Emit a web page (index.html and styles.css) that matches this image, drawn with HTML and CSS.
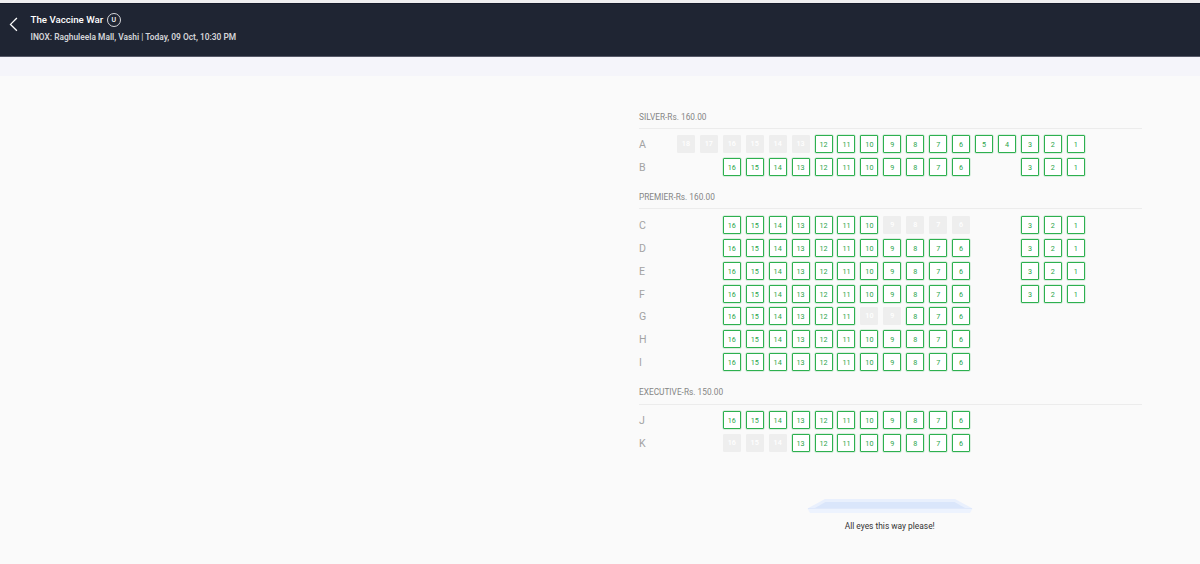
FILE: index.html
```
<!DOCTYPE html>
<html lang="en">
<head>
  <meta charset="UTF-8">
  <meta name="viewport" content="width=device-width, initial-scale=1.0">
  <title>The Vaccine War - Select Seats</title>
  <link rel="stylesheet" href="styles.css">
</head>
<body>
  <header class="header">
    <svg class="back" viewBox="0 0 9 15" width="9" height="15">
      <path d="M7.900 1 L1.500 7.400 L7.900 13.800" />
    </svg>
    <div class="show">
      <h1>The Vaccine War <span class="rating">U</span></h1>
      <p>INOX: Raghuleela Mall, Vashi | Today, 09 Oct, 10:30 PM</p>
    </div>
  </header>
  <div class="subbar"></div>

  <main class="layout">
    <div id="seats"></div>

    <!-- Screen -->
    <div class="screen">
      <svg viewBox="0 0 166 15" width="166" height="15">
        <path d="M18 0 H148 L165.500 9.500 H0.500 Z" fill="#e9f0fd" />
        <path d="M18.500 3 H147.500 L158 9 H8 Z" fill="#dae6fb" />
        <path d="M0.500 9.500 H165.500 L163 14 H3 Z" fill="#edf3fe" />
        <path d="M1 9.500 H165" stroke="#e0e9fb" />
      </svg>
      <p>All eyes this way please!</p>
    </div>
  </main>

  <script src="seats.js"></script>
</body>
</html>
```
FILE: styles.css
```
* {
  box-sizing: border-box;
}
body {
  margin: 0;
  background-color: #fafafa;
  font-family: Roboto, sans-serif;
  border-top: 3px solid #eeeeef;
}
h1, h2, p {
  margin: 0;
}
.header {
  display: flex;
  height: 54px;
  padding: 8px 0 0 9px;
  background-color: #1f2533;
  border-top: 1px solid #161b2a;
  border-bottom: 1px solid #565968;
  color: #fff;
}
.back {
  margin: 5px 12.5px 0 0;
  fill: none;
  stroke: #fff;
  stroke-width: 1.3;
}
.show h1 {
  display: flex;
  align-items: center;
  height: 15px;
  font-size: 9.7px;
  font-weight: 500;
}
.rating {
  width: 14px;
  height: 14px;
  margin-left: 3.5px;
  border: 1px solid #d5d6da;
  border-radius: 50%;
  font-size: 7px;
  line-height: 12px;
  text-align: center;
}
.show p {
  margin-top: 4px;
  font-size: 8.4px;
  line-height: 12px;
  font-weight: 600;
  color: #d3d4d8;
}
.subbar {
  height: 19px;
  background-color: #f5f5fa;
}
.layout {
  width: 502.5px;
  margin: 22px 0 0 639px;
}
.section h2 {
  height: 30.9px;
  margin-bottom: 3.8px;
  border-bottom: 1px solid #ececec;
  font-size: 8.3px;
  line-height: 38px;
  font-weight: 400;
  color: #858585;
}
.section + .section h2 {
  line-height: 37px;
}
.row {
  display: grid;
  grid-template-columns: 35.3px repeat(18, 22.95px);
  align-items: center;
  height: 22.95px;
}
.row-name {
  padding-top: 2px;
  font-size: 10.6px;
  line-height: 18px;
  color: #a3a3a3;
}
.seat {
  width: 18px;
  height: 18px;
  margin-left: 2.6px;
  border: 1px solid #2db04f;
  border-radius: 1px;
  background-color: #fff;
  box-shadow: 0 0 0 0.5px rgba(45, 176, 79, 0.3);
  color: #2aa54a;
  font-size: 7.2px;
  line-height: 17px;
  text-align: center;
}
.seat.sold {
  border-color: #eee;
  background-color: #eee;
  box-shadow: none;
  color: #fff;
  font-weight: 500;
  line-height: 15px;
}
.screen {
  margin-top: 44.5px;
  padding-right: 1px;
  text-align: center;
}
.screen svg {
  display: block;
  margin: 0 auto;
}
.screen p {
  margin-top: 6.5px;
  font-size: 8.4px;
  line-height: 12px;
  color: #333;
}
```
FILE: seats.js
```
// Row: name, seat ranges (high to low), sold seats
const sections = [
  {
    title: 'SILVER-Rs. 160.00',
    rows: [
      { name: 'A', ranges: [[18, 1]], sold: [18, 17, 16, 15, 14, 13] },
      { name: 'B', ranges: [[16, 6], [3, 1]], sold: [] },
    ],
  },
  {
    title: 'PREMIER-Rs. 160.00',
    rows: [
      { name: 'C', ranges: [[16, 6], [3, 1]], sold: [9, 8, 7, 6] },
      { name: 'D', ranges: [[16, 6], [3, 1]], sold: [] },
      { name: 'E', ranges: [[16, 6], [3, 1]], sold: [] },
      { name: 'F', ranges: [[16, 6], [3, 1]], sold: [] },
      { name: 'G', ranges: [[16, 6]], sold: [10, 9] },
      { name: 'H', ranges: [[16, 6]], sold: [] },
      { name: 'I', ranges: [[16, 6]], sold: [] },
    ],
  },
  {
    title: 'EXECUTIVE-Rs. 150.00',
    rows: [
      { name: 'J', ranges: [[16, 6]], sold: [] },
      { name: 'K', ranges: [[16, 6]], sold: [16, 15, 14] },
    ],
  },
];

function add(parent, tag, className, text) {
  const el = document.createElement(tag);
  if (className) el.className = className;
  if (text) el.textContent = text;
  parent.appendChild(el);
  return el;
}

const seats = document.getElementById('seats');

sections.forEach((section) => {
  const box = add(seats, 'section', 'section');
  add(box, 'h2', '', section.title);

  section.rows.forEach((row) => {
    const line = add(box, 'div', 'row');
    add(line, 'span', 'row-name', row.name);

    for (let n = 18; n >= 1; n--) {
      const exists = row.ranges.some(([from, to]) => n <= from && n >= to);
      if (!exists) {
        add(line, 'span');
        continue;
      }
      add(line, 'span', row.sold.includes(n) ? 'seat sold' : 'seat', n);
    }
  });
});
```
